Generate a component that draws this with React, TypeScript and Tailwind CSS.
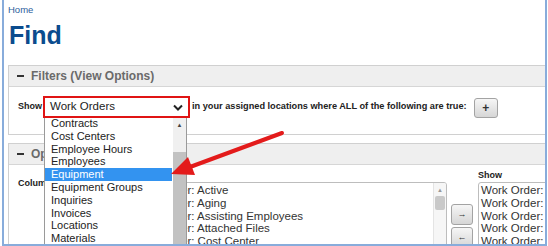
const dropdownItems = [
  "Contracts",
  "Cost Centers",
  "Employee Hours",
  "Employees",
  "Equipment",
  "Equipment Groups",
  "Inquiries",
  "Invoices",
  "Locations",
  "Materials",
  "Parts",
]

const available = [
  "Work Order: Active",
  "Work Order: Aging",
  "Work Order: Assisting Employees",
  "Work Order: Attached Files",
  "Work Order: Cost Center",
  "Work Order: Created",
]

const shown = ["Work Order: ID", "Work Order: Status", "Work Order: Type", "Work Order: Priority", "Work Order: Location", "Work Order: Due"]

function PanelHeader({ title }: { title: string }) {
  return (
    <div className="h-[21px] bg-[#efefef] border-b border-[#d6d6d6] flex items-center pl-[8px]">
      <span className="w-[7px] h-[2px] bg-[#333]" />
      <span className="ml-[7px] text-[12px] font-bold text-[#6a6a6a] leading-none">{title}</span>
    </div>
  )
}

function GrayButton({ children, className }: { children: React.ReactNode; className?: string }) {
  return (
    <div
      className={
        "flex items-center justify-center rounded-[3px] border border-[#a3a3a3] bg-gradient-to-b from-[#f6f6f6] to-[#d6d6d6] font-bold text-[#333] " +
        (className ?? "")
      }
    >
      {children}
    </div>
  )
}

export default function App() {
  return (
    <div className="w-[548px] h-[246px] bg-white overflow-hidden font-['Liberation_Sans',Arial,sans-serif]">
      <div className="relative ml-[2px] w-[545px] h-[246px] border-l-2 border-r-2 border-b-2 border-[#88acdb] overflow-hidden">
        {/* Breadcrumb + title */}
        <div className="h-[20px] leading-[20px] text-[9.5px] text-[#2b5e9c] pl-[4px]">Home</div>
        <h1 className="h-[30px] leading-[30px] text-[25px] font-bold text-[#0b4c8e] pl-[5px]">Find</h1>

        {/* Filters */}
        <div className="mt-[15px] ml-[4px] w-[538px] border border-[#d0d0d0]">
          <PanelHeader title="Filters (View Options)" />
          <div className="h-[47px] flex items-start pt-[9px] pl-[9px]">
            <div className="shrink-0 h-[22px] flex items-center text-[9px] font-bold text-[#222] w-[25px]">Show</div>
            <div className="shrink-0 relative z-20 w-[147px] h-[22px] bg-white border-2 border-[#e01414] flex items-center pl-[5px] text-[11.5px] text-[#222]">
              <span className="flex-1">Work Orders</span>
              <svg width="10" height="7" viewBox="0 0 10 7" className="mr-[5px]">
                <polyline points="1,1.5 5,5.5 9,1.5" fill="none" stroke="#222" strokeWidth="2" />
              </svg>
            </div>
            <div className="shrink-0 h-[22px] flex items-center ml-[2px] text-[9.2px] font-bold text-[#222] whitespace-nowrap">
              in your assigned locations where ALL of the following are true:
            </div>
            <GrayButton className="shrink-0 ml-[7px] mt-[2px] w-[24px] h-[20px] text-[12px]">+</GrayButton>
          </div>
        </div>

        {/* Options */}
        <div className="mt-[8px] ml-[4px] w-[538px] h-[120px] border border-[#d0d0d0] overflow-hidden">
          <PanelHeader title="Options" />
          <div className="flex pl-[9px]">
            <div className="shrink-0 w-[108px] pt-[13px] text-[9px] leading-[11px] font-bold text-[#222]">Columns</div>
            <div className="shrink-0 relative mt-[17px] w-[321px] h-[80px] border border-[#bdbdbd] rounded-[3px] pt-[1px] pl-[5px] text-[11.5px] leading-[12.8px] text-[#333] overflow-hidden">
              {available.map((a) => (
                <div key={a} className="whitespace-nowrap">
                  {a}
                </div>
              ))}
              <div className="absolute right-0 top-0 w-[13px] h-full bg-[#f6f6f6] border-l border-[#e4e4e4]">
                <div className="text-[6px] leading-none text-[#999] text-center mt-[4px]">▲</div>
                <div className="mx-[1px] mt-[3px] h-[14px] bg-[#c9c9c9] rounded-[2px]" />
              </div>
            </div>
            <div className="shrink-0 ml-[4px] mt-[39px] w-[22px] flex flex-col gap-[2px]">
              <GrayButton className="h-[21px] text-[9px]">→</GrayButton>
              <GrayButton className="h-[21px] text-[9px]">←</GrayButton>
            </div>
            <div className="shrink-0 ml-[5px]">
              <div className="pt-[5px] text-[9px] leading-[11px] font-bold text-[#222]">Show</div>
              <div className="mt-[1px] w-[120px] h-[80px] border border-[#bdbdbd] rounded-[3px] pt-[1px] pl-[2px] text-[11.5px] leading-[12.8px] text-[#333] overflow-hidden">
                {shown.map((s) => (
                  <div key={s} className="whitespace-nowrap">
                    {s}
                  </div>
                ))}
              </div>
            </div>
          </div>
        </div>

        {/* Open dropdown list */}
        <div className="absolute z-10 left-[40px] top-[116px] w-[143px] h-[140px] bg-white border border-[#9a9a9a] text-[11px] leading-[12.8px] text-[#222]">
          {dropdownItems.map((item) => (
            <div
              key={item}
              className={
                item === "Equipment"
                  ? "w-[127px] pl-[6px] bg-[#3393f0] text-white"
                  : "w-[127px] pl-[6px]"
              }
            >
              {item}
            </div>
          ))}
          <div className="absolute right-0 top-0 bottom-0 w-[13px] bg-[#f0f0f0]">
            <div className="text-[6px] leading-none text-[#444] text-center mt-[5px]">▲</div>
            <div className="absolute left-0 right-0 top-[35px] bottom-0 bg-[#c2c2c2]" />
          </div>
        </div>

        {/* Red callout arrow */}
        <svg
          width="548"
          height="246"
          viewBox="0 0 548 246"
          className="absolute left-[-4px] top-0 z-30 pointer-events-none"
        >
          <line x1="282" y1="133" x2="190" y2="167" stroke="#e31b1b" strokeWidth="4" strokeLinecap="round" />
          <polygon points="171,174 195,175 188,157" fill="#e31b1b" />
        </svg>
      </div>
    </div>
  )
}
